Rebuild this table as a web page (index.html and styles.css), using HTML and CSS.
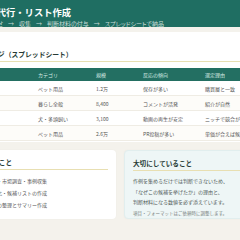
FILE: index.html
```html
<!DOCTYPE html>
<html lang="ja">
<head>
<meta charset="utf-8">
<link rel="stylesheet" href="styles.css">
</head>
<body>
<div class="page">
  <header class="hero">
    <h1 class="hero-title">リサーチ代行・リスト作成</h1>
    <p class="hero-sub">
      <span class="step first">お問い合わせ</span><span class="arrow">→</span><span class="step">収集</span><span class="arrow">→</span><span class="step">判断材料の付与</span><span class="arrow">→</span><span class="step">スプレッドシートで納品</span>
    </p>
  </header>
  <main class="content">
    <section class="card wide">
      <h2 class="card-title">納品イメージ（スプレッドシート）</h2>
      <div class="table">
        <div class="tr th">
          <span></span><span>カテゴリ</span><span>規模</span><span>反応の傾向</span><span>選定理由</span>
        </div>
        <div class="tr">
          <span></span><span>ペット用品</span><span>1.2万</span><span>保存が多い</span><span>購買層と一致</span>
        </div>
        <div class="tr">
          <span></span><span>暮らし全般</span><span>8,400</span><span>コメントが活発</span><span>紹介が自然</span>
        </div>
        <div class="tr">
          <span></span><span>犬・多頭飼い</span><span>3,100</span><span>動画の再生が安定</span><span>ニッチで競合が少ない</span>
        </div>
        <div class="tr">
          <span></span><span>ペット用品</span><span>2.6万</span><span>PR投稿が多い</span><span>単価が合えば候補</span>
        </div>
      </div>
    </section>
    <div class="cols">
      <section class="card small services">
        <h2 class="card-title">お手伝いできること</h2>
        <ul class="list">
          <li>リサーチ・市場調査・事例収集</li>
          <li>リスト化・候補リストの作成</li>
          <li>情報の整理とサマリー作成</li>
        </ul>
      </section>
      <section class="card small note">
        <h2 class="card-title">大切にしていること</h2>
        <p class="text">作例を集めるだけでは判断できないため、<br>「なぜこの候補を挙げたか」の理由と、<br>判断材料になる数値を必ず添えています。</p>
        <p class="text sub">項目・フォーマットはご依頼時に調整します。</p>
      </section>
    </div>
  </main>
</div>
</body>
</html>
```
FILE: styles.css
```css
html, body {
  margin: 0;
  padding: 0;
  background: #f4f2ec;
  overflow: hidden;
}
body {
  width: 240px;
  height: 240px;
  font-family: "Noto Sans CJK JP", "Noto Sans", sans-serif;
  color: #4a4a4a;
}
.page {
  width: 300px;
  margin-left: -30px;
}
.hero {
  background: #1f6e62;
  height: 27px;
  box-sizing: border-box;
  padding: 5px 0 0 0;
}
.hero-title {
  margin: 0 0 0 -10.5px;
  font-size: 9.3px;
  line-height: 14px;
  font-weight: 700;
  color: #ffffff;
  white-space: nowrap;
}
.hero-sub {
  display: flex;
  align-items: center;
  gap: 5px;
  margin: 1px 0 0 -7px;
  font-size: 6px;
  line-height: 7px;
  color: #c9ddd7;
  white-space: nowrap;
  font-feature-settings: "palt";
}
.step.first {
  width: 40px;
  text-align: right;
  flex: none;
}
.arrow {
  width: 6px;
  text-align: center;
  flex: none;
}
.content {
  padding-top: 5px;
}
.card {
  background: #ffffff;
  border-radius: 4px;
}
.card-title {
  margin: 0 0 6px 0;
  padding: 0 0 2px 0;
  font-size: 6.6px;
  line-height: 9px;
  font-weight: 700;
  color: #263a35;
  border-bottom: 1px solid #e8dfb2;
  white-space: nowrap;
}
.wide {
  padding: 18px 0 1px 0;
}
.wide .card-title {
  font-size: 6.8px;
  margin-left: -34px;
  padding-left: 28px;
}
.table {
  font-size: 5px;
}
.tr {
  display: grid;
  grid-template-columns: 60px 58px 47px 62px 73px;
  height: 15px;
  align-items: center;
  border-bottom: 1px solid #efece4;
  box-sizing: border-box;
  color: #555555;
}
.tr span {
  padding-left: 8px;
  white-space: nowrap;
}
.th {
  height: 13px;
  background: #236f62;
  color: #d8ebe5;
  border-bottom: 0;
}
.tr:nth-child(odd):not(.th) {
  background: #fdfcf9;
}
.cols {
  display: grid;
  grid-template-columns: 146px 146px;
  gap: 8px;
  margin-top: 8px;
}
.small {
  padding: 8px 8px 10px 8px;
  height: 69px;
  box-sizing: border-box;
  box-shadow: 0 0 2px rgba(0,0,0,0.04);
}
.small .card-title {
  margin-bottom: 5px;
}
.services .card-title {
  text-indent: -25px;
}
.list {
  list-style: none;
  margin: 0 0 0 -8px;
  padding: 0;
  width: 77px;
  text-align: right;
  font-size: 5px;
  line-height: 12px;
  color: #555;
}
.list li {
  white-space: nowrap;
}
.note {
  background: #eef6f6;
  border: 1px solid #e1eeee;
}
.text {
  margin: 0;
  font-size: 5px;
  line-height: 10.5px;
  color: #4f5a58;
  white-space: nowrap;
}
.text.sub {
  color: #7a8280;
  font-size: 4.5px;
}
```
